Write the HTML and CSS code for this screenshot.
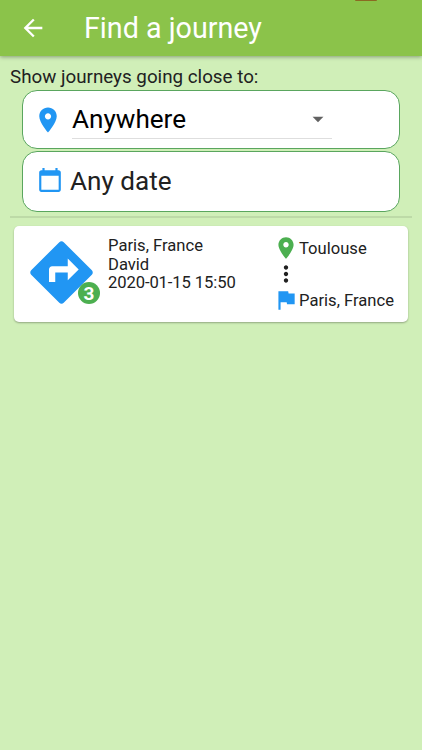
FILE: index.html
```html
<!DOCTYPE html>
<html lang="en">
<head>
    <meta charset="UTF-8">
    <meta name="viewport" content="width=device-width, initial-scale=1.0">
    <title>Find a journey</title>
    <link rel="stylesheet" href="styles.css">
</head>
<body>
    <header class="app-bar">
        <svg class="back" viewBox="0 0 24 24"><path d="M20 11H7.83l5.59-5.59L12 4l-8 8 8 8 1.41-1.41L7.83 13H20v-2z"/></svg>
        <h1 class="title">Find a journey</h1>
        <span class="notch"></span>
    </header>
    <main class="content">
        <p class="label">Show journeys going close to:</p>
        <div class="field place">
            <svg class="pin" viewBox="0 0 24 24"><path d="M12 2C8.13 2 5 5.13 5 9c0 5.25 7 13 7 13s7-7.75 7-13c0-3.87-3.13-7-7-7zm0 9.5c-1.38 0-2.5-1.12-2.5-2.5s1.12-2.5 2.5-2.5 2.5 1.12 2.5 2.5-1.12 2.5-2.5 2.5z"/></svg>
            <div class="select">
                <span class="value">Anywhere</span>
                <svg class="arrow" viewBox="0 0 24 24"><path d="M7 10l5 5 5-5z"/></svg>
            </div>
        </div>
        <div class="field date">
            <svg class="calendar" viewBox="0 0 24 24"><path d="M20 3h-1V1h-2v2H7V1H5v2H4c-1.1 0-2 .9-2 2v16c0 1.1.9 2 2 2h16c1.1 0 2-.9 2-2V5c0-1.1-.9-2-2-2zm0 18H4V8h16v13z"/></svg>
            <span class="value">Any date</span>
        </div>
        <div class="divider"></div>
        <div class="card">
            <div class="journey-icon">
                <svg class="directions" viewBox="0 0 24 24"><path d="M21.71 11.29l-9-9c-.39-.39-1.02-.39-1.41 0l-9 9c-.39.39-.39 1.02 0 1.41l9 9c.39.39 1.02.39 1.41 0l9-9c.39-.38.39-1.01 0-1.41zM14 14.5V12h-4v3H8v-4c0-.55.45-1 1-1h5V7.5l3.5 3.5-3.5 3.5z"/></svg>
                <span class="badge">3</span>
            </div>
            <div class="info">
                <div>Paris, France</div>
                <div>David</div>
                <div class="time">2020-01-15 15:50</div>
            </div>
            <div class="route">
                <div class="stop">
                    <svg class="green" viewBox="0 0 24 24"><path d="M12 2C8.13 2 5 5.13 5 9c0 5.25 7 13 7 13s7-7.75 7-13c0-3.87-3.13-7-7-7zm0 9.5c-1.38 0-2.5-1.12-2.5-2.5s1.12-2.5 2.5-2.5 2.5 1.12 2.5 2.5-1.12 2.5-2.5 2.5z"/></svg>
                    <span>Toulouse</span>
                </div>
                <div class="stop">
                    <svg viewBox="0 0 24 24"><path d="M12 8c1.1 0 2-.9 2-2s-.9-2-2-2-2 .9-2 2 .9 2 2 2zm0 2c-1.1 0-2 .9-2 2s.9 2 2 2 2-.9 2-2-.9-2-2-2zm0 6c-1.1 0-2 .9-2 2s.9 2 2 2 2-.9 2-2-.9-2-2-2z"/></svg>
                </div>
                <div class="stop">
                    <svg class="blue" viewBox="0 0 24 24"><path d="M14.4 6L14 4H5v17h2v-7h5.6l.4 2h7V6z"/></svg>
                    <span>Paris, France</span>
                </div>
            </div>
        </div>
    </main>
</body>
</html>
```
FILE: styles.css
```css
* {
    box-sizing: border-box;
}
body {
    margin: 0;
    min-height: 100vh;
    background: #d0efb8;
    font-family: Roboto, sans-serif;
    color: #212121;
    overflow: hidden;
}
svg {
    display: block;
    flex: none;
}
.app-bar {
    position: relative;
    display: flex;
    align-items: center;
    height: 56px;
    padding-left: 19px;
    background: #8bc34a;
    color: white;
    box-shadow: 0 1px 4px rgba(0, 0, 0, 0.35);
}
.back {
    width: 28px;
    height: 28px;
    fill: white;
}
.title {
    margin: 0 0 0 37px;
    font-size: 28.7px;
    font-weight: 400;
    white-space: nowrap;
}
/* edge of the ribbon above the bar */
.notch {
    position: absolute;
    top: 0;
    left: 355px;
    width: 22px;
    height: 1px;
    background: #8a6a22;
    border-radius: 0 0 11px 11px;
}
.content {
    padding: 10px 10px 0;
}
.label {
    margin: 0;
    height: 24px;
    font-size: 18.8px;
    line-height: 22px;
    white-space: nowrap;
}
.field {
    display: flex;
    align-items: center;
    width: 378px;
    margin-left: 12px;
    background: white;
    border: 1.5px solid #5aa65e;
    border-radius: 15px;
}
.value {
    font-size: 26.1px;
    line-height: 32px;
    white-space: nowrap;
}
.place {
    height: 59px;
    padding-left: 10px;
    color: black;
}
.date {
    height: 61px;
    margin-top: 2px;
    padding: 0 0 4px 14px;
}
.pin {
    width: 30px;
    height: 30px;
    fill: #2196f3;
}
.select {
    display: flex;
    align-items: center;
    justify-content: space-between;
    width: 260px;
    height: 39px;
    margin-left: 9px;
    border-bottom: 1px solid #dedede;
}
.arrow {
    width: 26px;
    height: 26px;
    margin-right: 1px;
    fill: #616161;
}
.calendar {
    width: 26px;
    height: 26px;
    fill: #2196f3;
}
.date .value {
    margin-left: 7px;
    padding-top: 2px;
}
.divider {
    height: 2px;
    margin-top: 4px;
    background: #bddaa7;
}
.card {
    display: flex;
    width: 394px;
    height: 96px;
    margin: 8px 0 0 4px;
    padding-left: 10px;
    background: white;
    border-radius: 5px;
    box-shadow: 0 1px 2px rgba(0, 0, 0, 0.3);
    font-size: 16.6px;
}
.journey-icon {
    position: relative;
    width: 75px;
    padding-top: 9px;
}
.directions {
    width: 75px;
    height: 75px;
    fill: #2196f3;
}
.badge {
    position: absolute;
    top: 56px;
    left: 54px;
    width: 22px;
    height: 22px;
    border-radius: 50%;
    background: #4caf50;
    color: white;
    font-size: 19px;
    font-weight: 700;
    line-height: 23px;
    text-align: center;
}
.info {
    width: 174px;
    padding: 11px 0 0 9px;
    line-height: 18.7px;
    white-space: nowrap;
}
.time {
    letter-spacing: -0.1px;
}
.route {
    padding-top: 9px;
}
.stop {
    display: flex;
    align-items: center;
    height: 26px;
    white-space: nowrap;
}
.stop svg {
    width: 26px;
    height: 26px;
    fill: #212121;
}
.stop .green {
    fill: #4caf50;
}
.stop .blue {
    fill: #2196f3;
}
```
